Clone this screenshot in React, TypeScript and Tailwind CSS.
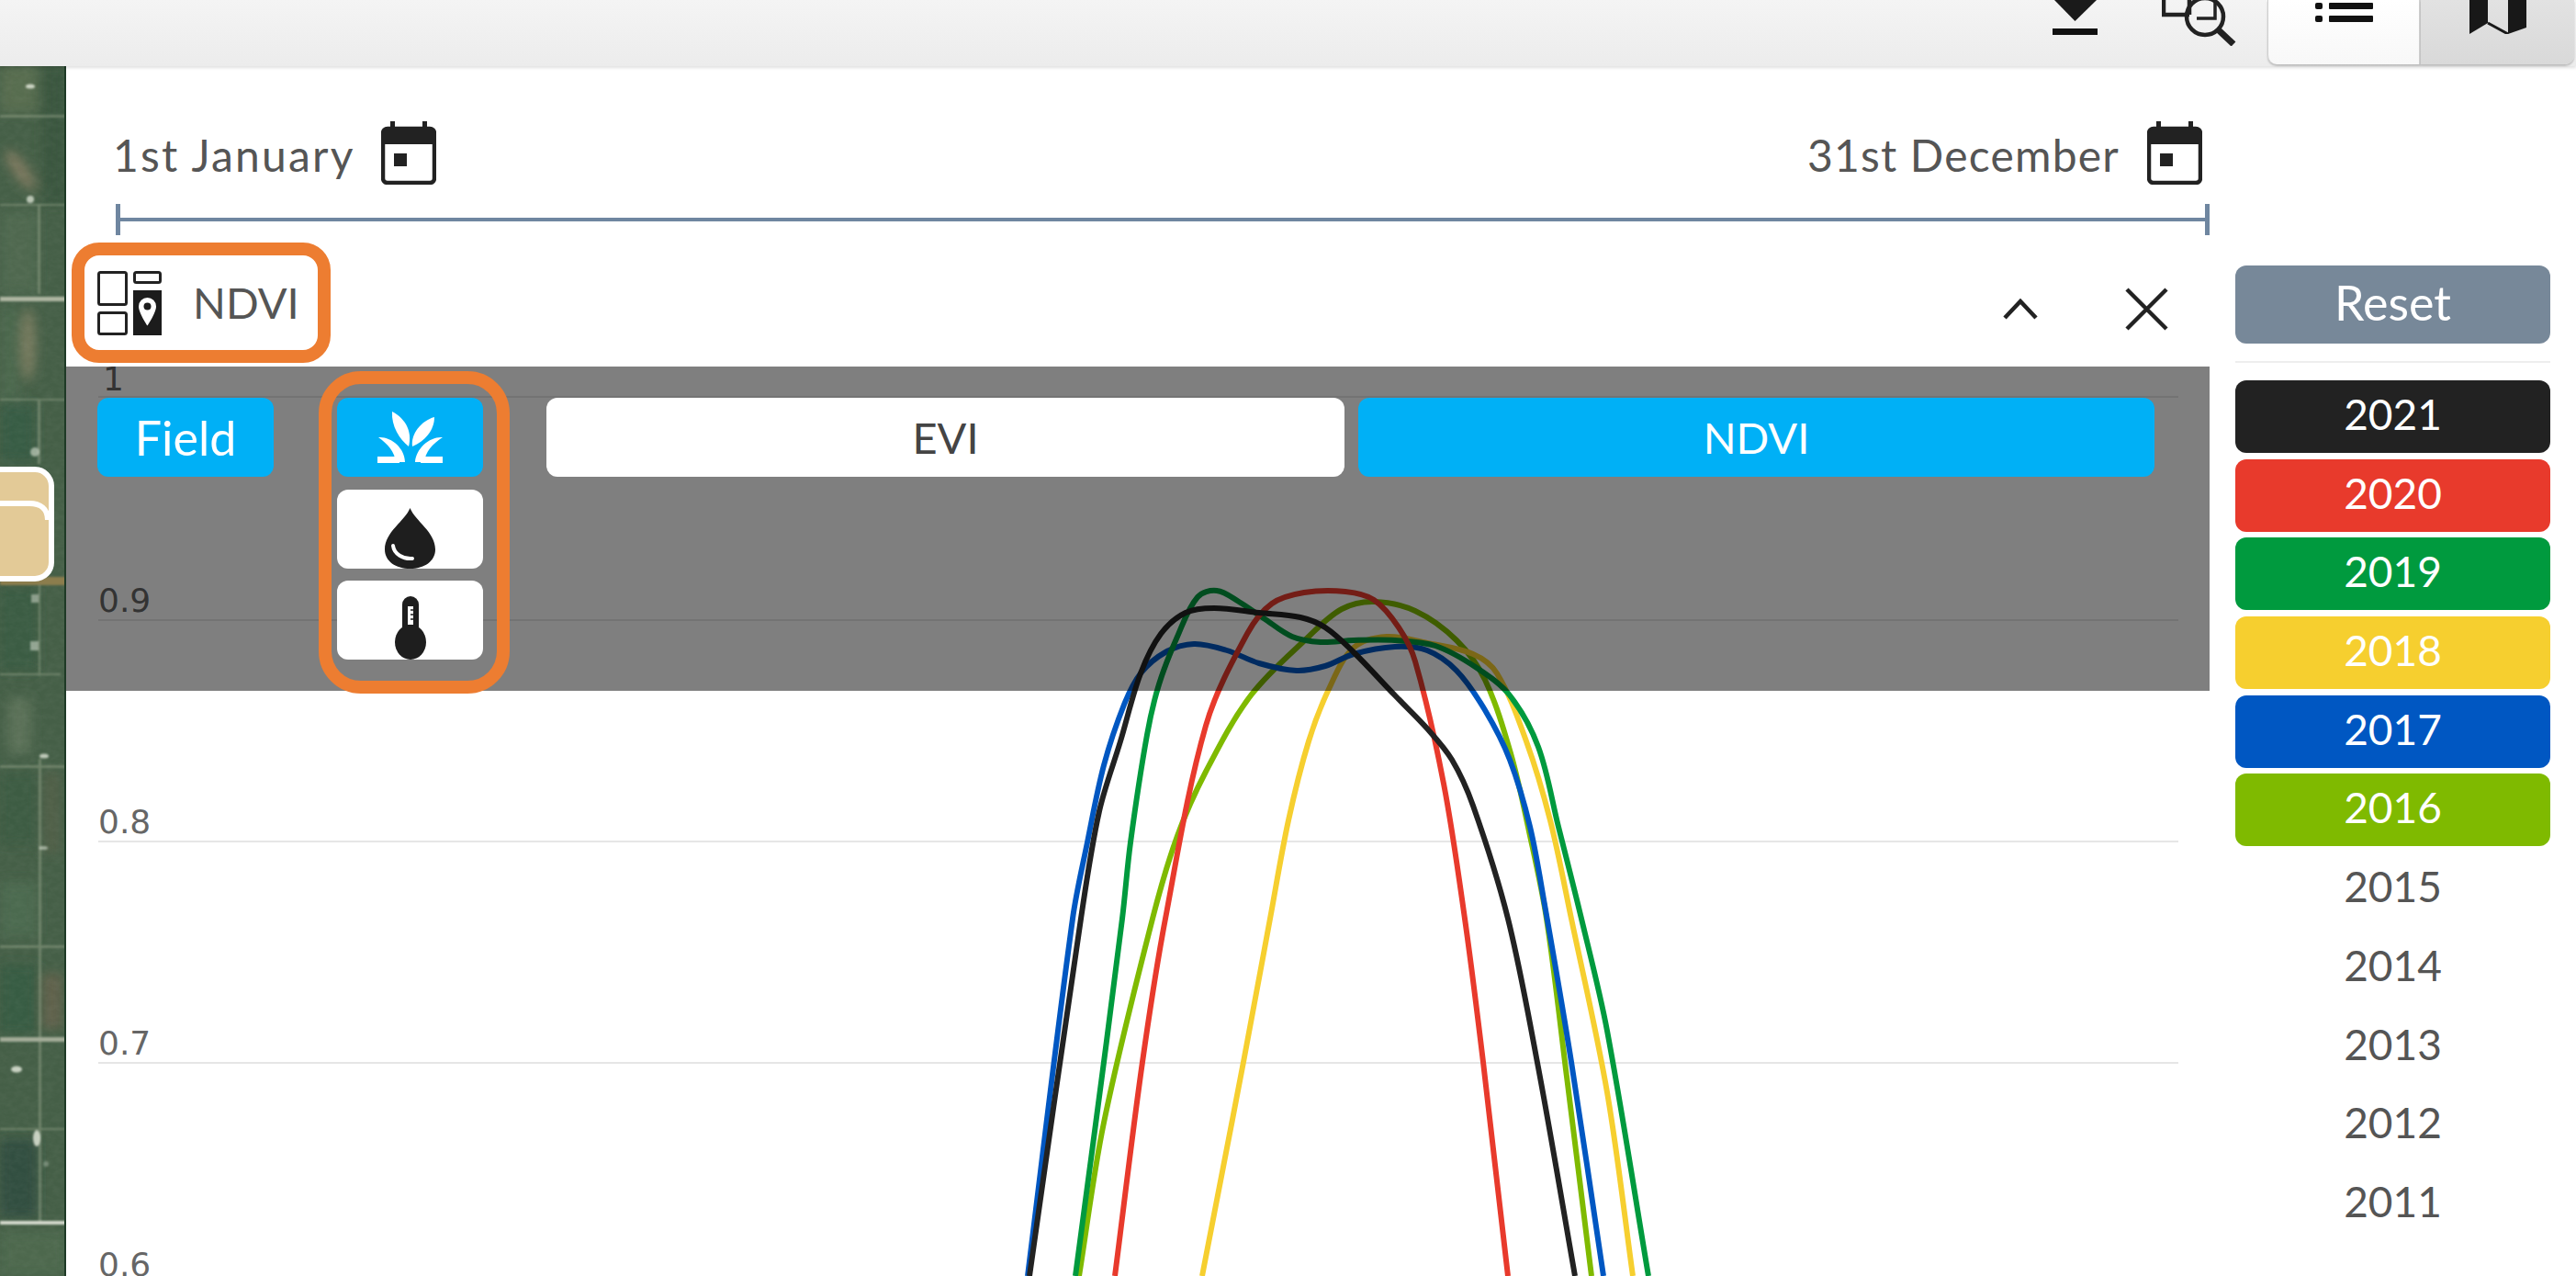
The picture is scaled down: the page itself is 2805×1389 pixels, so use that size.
import React from 'react';

type Point = [number, number];

interface Curve {
  color: string;
  points: Point[];
}

// smooth line through the read-off points, handle length follows the chord so uneven spacing doesn't kink
const smooth = (pts: Point[]): string => {
  const tangent = (i: number): Point => {
    const a = pts[i - 1] || pts[i];
    const b = pts[i + 1] || pts[i];
    const len = Math.hypot(b[0] - a[0], b[1] - a[1]) || 1;
    return [(b[0] - a[0]) / len, (b[1] - a[1]) / len];
  };
  let d = `M${pts[0][0]} ${pts[0][1]}`;
  for (let i = 0; i < pts.length - 1; i++) {
    const p1 = pts[i];
    const p2 = pts[i + 1];
    const chord = Math.hypot(p2[0] - p1[0], p2[1] - p1[1]) / 3;
    const t1 = tangent(i);
    const t2 = tangent(i + 1);
    d += ` C${(p1[0] + t1[0] * chord).toFixed(1)} ${(p1[1] + t1[1] * chord).toFixed(1)} ${(p2[0] - t2[0] * chord).toFixed(1)} ${(p2[1] - t2[1] * chord).toFixed(1)} ${p2[0]} ${p2[1]}`;
  }
  return d;
};

const curves: Curve[] = [
  {
    color: '#7fba00',
    points: [[1175, 1389], [1202, 1222], [1255, 1000], [1282, 910], [1313, 840], [1362, 757], [1425, 693], [1461, 663], [1496, 655], [1541, 665], [1586, 697], [1617, 740], [1645, 820], [1665, 905], [1684, 1000], [1706, 1172], [1733, 1389]],
  },
  {
    color: '#f6cf2f',
    points: [[1309, 1389], [1354, 1156], [1383, 1000], [1403, 893], [1425, 807], [1447, 750], [1474, 705], [1510, 693], [1554, 700], [1604, 712], [1630, 733], [1662, 807], [1688, 893], [1711, 1000], [1750, 1189], [1778, 1389]],
  },
  {
    color: '#0057c2',
    points: [[1119, 1389], [1168, 1000], [1184, 917], [1202, 833], [1224, 767], [1242, 733], [1269, 710], [1300, 701], [1336, 708], [1371, 722], [1412, 730], [1443, 725], [1474, 712], [1519, 704], [1554, 708], [1586, 730], [1617, 773], [1644, 827], [1666, 900], [1682, 985], [1711, 1156], [1746, 1389]],
  },
  {
    color: '#009a3e',
    points: [[1171, 1389], [1202, 1156], [1222, 1000], [1231, 917], [1249, 800], [1262, 745], [1282, 693], [1304, 650], [1325, 643], [1349, 655], [1376, 673], [1407, 693], [1438, 699], [1474, 697], [1519, 697], [1563, 703], [1608, 727], [1644, 757], [1675, 813], [1697, 900], [1722, 1000], [1750, 1122], [1795, 1389]],
  },
  {
    color: '#e83a2c',
    points: [[1214, 1389], [1244, 1156], [1269, 1000], [1313, 790], [1358, 690], [1385, 657], [1420, 645], [1465, 644], [1496, 653], [1523, 683], [1541, 720], [1572, 853], [1595, 1000], [1615, 1156], [1642, 1389]],
  },
  {
    color: '#222222',
    points: [[1121, 1389], [1177, 1000], [1197, 883], [1220, 807], [1242, 733], [1264, 690], [1291, 667], [1322, 662], [1371, 667], [1416, 672], [1443, 683], [1474, 710], [1519, 757], [1554, 793], [1581, 827], [1604, 877], [1642, 1000], [1675, 1162], [1715, 1389]],
  },
];

const gridLines = [
  { label: '1', y: 432, x: 112, base: 425 },
  { label: '0.9', y: 675, x: 107, base: 666 },
  { label: '0.8', y: 916, x: 107, base: 907 },
  { label: '0.7', y: 1157, x: 107, base: 1148 },
  { label: '0.6', y: 1398, x: 107, base: 1389 },
];

const years = [
  { year: '2021', bg: 'bg-[#222222] text-white' },
  { year: '2020', bg: 'bg-[#e83a2c] text-white' },
  { year: '2019', bg: 'bg-[#009a3e] text-white' },
  { year: '2018', bg: 'bg-[#f6cf2f] text-white' },
  { year: '2017', bg: 'bg-[#0057c2] text-white' },
  { year: '2016', bg: 'bg-[#7fba00] text-white' },
  { year: '2015', bg: 'text-[#555555]' },
  { year: '2014', bg: 'text-[#555555]' },
  { year: '2013', bg: 'text-[#555555]' },
  { year: '2012', bg: 'text-[#555555]' },
  { year: '2011', bg: 'text-[#555555]' },
];

const CalendarIcon = () => (
  <svg width="60" height="69" viewBox="0 0 60 69" className="shrink-0">
    <rect x="10" y="0" width="5" height="10" fill="#222" />
    <rect x="45" y="0" width="5" height="10" fill="#222" />
    <rect x="2" y="8" width="56" height="59" rx="5" fill="none" stroke="#222" strokeWidth="4.5" />
    <path d="M2 13a5 5 0 0 1 5-5h46a5 5 0 0 1 5 5v12H2z" fill="#222" />
    <rect x="14" y="35" width="14" height="14" fill="#222" />
  </svg>
);

const LayersIcon = () => (
  <svg width="70" height="70" viewBox="0 0 70 70" className="shrink-0">
    <g fill="none" stroke="#222" strokeWidth="3">
      <rect x="1.5" y="1.5" width="30" height="35" rx="2" />
      <rect x="1.5" y="45.5" width="30" height="23" rx="2" />
      <rect x="40.5" y="1.5" width="28" height="11" rx="2" />
    </g>
    <rect x="39" y="21" width="31" height="49" fill="#1c1c1c" />
    <path d="M54.5 29a9.5 9.5 0 0 1 9.5 9.5c0 7-9.5 21-9.5 21s-9.5-14-9.5-21a9.5 9.5 0 0 1 9.5-9.5z" fill="#fff" />
    <circle cx="54.5" cy="38.5" r="4" fill="#1c1c1c" />
  </svg>
);

const LeafIcon = () => (
  <svg width="71" height="56" viewBox="0 0 71 56" fill="#fff">
    <path d="M16 0C31 8 38 22 34 38C24 30 15 16 16 0Z" />
    <path d="M62 6C48 10 36 24 38 38C52 32 62 20 62 6Z" />
    <path d="M1 28C15 27 30 40 30 55H20C19 44 11 35 1 28Z" />
    <path d="M71 28C57 27 42 40 41 55H51C52 44 60 35 71 28Z" />
    <path d="M0 49H24V56H0Z" />
    <path d="M47 49H71V56H47Z" />
  </svg>
);

const DropIcon = () => (
  <svg width="55" height="66" viewBox="0 0 55 66">
    <path d="M27.5 0C33 14 55 26 55 45C55 58 43 66 27.5 66C12 66 0 58 0 45C0 26 22 14 27.5 0Z" fill="#1e1e1e" />
    <path d="M9 41C10 50 20 56 30 55" fill="none" stroke="#fff" strokeWidth="4" strokeLinecap="round" />
  </svg>
);

const ThermometerIcon = () => (
  <svg width="34" height="69" viewBox="0 0 34 69">
    <rect x="8" y="0" width="18" height="44" rx="9" fill="#1e1e1e" />
    <ellipse cx="17" cy="50" rx="17" ry="19" fill="#1e1e1e" />
    <rect x="14" y="11" width="6" height="20" fill="#fff" />
    <path d="M17 15h3M17 20h3M17 25h3" stroke="#1e1e1e" strokeWidth="1.5" />
  </svg>
);

const TopBarIcons = () => (
  <>
    <svg width="49" height="38" viewBox="0 0 49 38" className="shrink-0">
      <path d="M2 0H48L24.5 23Z" fill="#1a1a1a" />
      <rect x="0" y="31" width="49" height="7" fill="#111" />
    </svg>
    <svg width="82" height="50" viewBox="0 0 82 50" className="ml-[70px] shrink-0" fill="none" stroke="#222" strokeWidth="4.5">
      <path d="M2 0V16H30" />
      <path d="M30 0V16" />
      <circle cx="47" cy="18" r="20" />
      <path d="M62 33L78 48" strokeWidth="7" />
      <path d="M50 -2H58V20H38" strokeWidth="3.5" />
    </svg>
  </>
);

// satellite strip on the left, just blurred patches and field tracks
const MapStrip = () => (
  <svg width="72" height="1317" viewBox="0 72 72 1317" className="shrink-0">
    <defs>
      <filter id="soft" x="-30%" y="-30%" width="160%" height="160%">
        <feGaussianBlur stdDeviation="6" />
      </filter>
      <filter id="softer" x="-20%" y="-20%" width="140%" height="140%">
        <feGaussianBlur stdDeviation="1.1" />
      </filter>
      <filter id="grain">
        <feTurbulence type="fractalNoise" baseFrequency="0.12 0.18" numOctaves="3" seed="7" />
        <feColorMatrix values="0 0 0 0 0.75  0 0 0 0 0.8  0 0 0 0 0.7  0.8 0 0 0 -0.25" />
      </filter>
    </defs>
    <rect x="0" y="72" width="72" height="1317" fill="#3f5e45" />
    <g filter="url(#soft)">
      <rect x="0" y="72" width="40" height="50" fill="#566f50" />
      <rect x="46" y="72" width="26" height="150" fill="#31523a" />
      <ellipse cx="22" cy="185" rx="8" ry="26" transform="rotate(-35 22 185)" fill="#857f63" />
      <rect x="0" y="230" width="40" height="90" fill="#4b6b4f" />
      <ellipse cx="31" cy="375" rx="8" ry="40" fill="#7f8264" />
      <rect x="0" y="335" width="22" height="100" fill="#47694e" />
      <rect x="0" y="440" width="38" height="62" fill="#2f5a42" />
      <rect x="0" y="640" width="40" height="90" fill="#335a41" />
      <rect x="8" y="760" width="26" height="60" fill="#5a745a" />
      <rect x="0" y="840" width="40" height="80" fill="#345a40" />
      <rect x="46" y="840" width="20" height="90" fill="#4d5f47" />
      <rect x="46" y="1060" width="22" height="60" fill="#62624c" />
      <rect x="0" y="960" width="40" height="60" fill="#466c50" />
      <rect x="0" y="1050" width="40" height="75" fill="#2f5a40" />
      <rect x="0" y="1240" width="40" height="85" fill="#274a3c" />
      <rect x="0" y="1340" width="72" height="49" fill="#4a6b4d" />
    </g>
    <rect x="0" y="72" width="72" height="1317" fill="#5f6352" opacity="0.2" />
    <rect x="0" y="72" width="72" height="1317" filter="url(#grain)" opacity="0.1" />
    <g filter="url(#softer)">
      <g fill="#a9b49c" opacity="0.4">
        <rect x="0" y="125" width="72" height="3" />
        <rect x="0" y="222" width="72" height="2" />
        <rect x="0" y="434" width="72" height="2" />
        <rect x="0" y="733" width="66" height="2" />
        <rect x="0" y="833" width="72" height="3" />
        <rect x="0" y="1029" width="72" height="3" />
        <rect x="0" y="1228" width="72" height="2" />
        <rect x="41" y="222" width="3" height="98" />
        <rect x="41" y="435" width="3" height="70" />
        <rect x="42" y="636" width="2" height="100" />
        <rect x="42" y="826" width="3" height="505" />
      </g>
      <rect x="0" y="323" width="72" height="5" fill="#aeb6a2" />
      <rect x="0" y="1129" width="72" height="5" fill="#a3ac98" />
      <rect x="0" y="1329" width="72" height="4" fill="#d5dace" />
      <rect x="0" y="628" width="72" height="9" fill="#8c7d4e" />
      <g fill="#e8eee0">
        <ellipse cx="33" cy="94" rx="5" ry="2.5" opacity="0.8" />
        <ellipse cx="33" cy="217" rx="4" ry="4" opacity="0.7" />
        <ellipse cx="38" cy="492" rx="5" ry="5" opacity="0.55" />
        <rect x="34" y="647" width="8" height="9" opacity="0.45" />
        <rect x="33" y="698" width="9" height="10" opacity="0.5" />
        <ellipse cx="48" cy="823" rx="5" ry="2.5" opacity="0.75" />
        <ellipse cx="47" cy="923" rx="5" ry="2" opacity="0.55" />
        <ellipse cx="18" cy="1164" rx="6" ry="3.5" opacity="0.8" />
        <ellipse cx="40" cy="1239" rx="4" ry="9" opacity="0.8" />
        <ellipse cx="50" cy="1267" rx="3" ry="3" opacity="0.3" />
      </g>
    </g>
    <rect x="70" y="72" width="2" height="1317" fill="#1e3a26" />
    <rect x="-20" y="511" width="76" height="119" rx="18" fill="#e3ca97" stroke="#fff" strokeWidth="6" />
    <path d="M-20 548H32C44 548 52 554 52 566" fill="none" stroke="#fff" strokeWidth="6" />
  </svg>
);

const Chart = () => (
  <svg viewBox="72 399 2334 990" width="2334" height="990" className="absolute left-0 top-0 overflow-visible">
    {gridLines.map((g) => (
      <g key={g.label}>
        <rect x="107" y={g.y - 1} width="2265" height="2" fill="#e6e6e6" />
        <text x={g.x} y={g.base} fontSize="36" fill="#666666" fontFamily="'DejaVu Sans', sans-serif">
          {g.label}
        </text>
      </g>
    ))}
    {curves.map((c) => (
      <path key={c.color} d={smooth(c.points)} fill="none" stroke={c.color} strokeWidth="6" strokeLinejoin="round" />
    ))}
  </svg>
);

export default function App() {
  return (
    <div className="flex h-[1389px] w-[2805px] flex-col overflow-hidden bg-white text-[#555555] [font-family:Lato,sans-serif]">
      {/* top bar, cut off by the screenshot */}
      <div className="relative z-10 flex h-[72px] shrink-0 items-start justify-end bg-gradient-to-b from-[#f4f4f4] to-[#ececec] pr-[2px] shadow-[0_2px_3px_rgba(0,0,0,0.12)]">
        <div className="mr-[33px] flex items-start">
          <TopBarIcons />
        </div>
        <div className="flex h-[70px] w-[167px] items-start justify-center rounded-bl-[10px] border-l border-r-2 border-[#cfcfcf] bg-gradient-to-b from-white to-[#f8f8f8] pt-[3px] shadow-[0_2px_2px_rgba(0,0,0,0.2)]">
          <svg width="63" height="21" viewBox="0 0 63 21">
            <rect x="0" y="0" width="8" height="7" rx="2" fill="#111" />
            <rect x="15" y="0" width="48" height="7" rx="1" fill="#111" />
            <rect x="0" y="14" width="8" height="7" rx="2" fill="#111" />
            <rect x="15" y="14" width="48" height="7" rx="1" fill="#111" />
          </svg>
        </div>
        <div className="flex h-[70px] w-[167px] items-start justify-center rounded-br-[10px] bg-gradient-to-b from-[#e2e2e2] to-[#d9d9d9] shadow-[0_2px_2px_rgba(0,0,0,0.2)]">
          <svg width="62" height="37" viewBox="0 0 62 37">
            <path d="M0 0H20V25L0 37Z" fill="#181818" />
            <path d="M42 0H62V30L42 37Z" fill="#181818" />
            <path d="M20 25L42 37" fill="none" stroke="#181818" strokeWidth="3" />
          </svg>
        </div>
      </div>

      <div className="flex min-h-0 flex-1">
        <MapStrip />

        {/* chart panel */}
        <div className="flex w-[2334px] shrink-0 flex-col">
          <div className="flex h-[127px] shrink-0 items-start justify-between pl-[51px] pr-[8px] pt-[58px]">
            <div className="flex items-center gap-[28px]">
              <span className="pt-[4px] text-[48px] leading-[69px] tracking-[2.2px]">1st January</span>
              <CalendarIcon />
            </div>
            <div className="flex items-center gap-[30px]">
              <span className="pt-[4px] text-[48px] leading-[69px] tracking-[1.2px]">31st December</span>
              <CalendarIcon />
            </div>
          </div>
          <div className="ml-[54px] mt-[23px] flex h-[34px] shrink-0 items-center border-x-[5px] border-[#6f86a0]">
            <div className="h-[4px] flex-1 bg-[#6f86a0]" />
          </div>
          <div className="mt-[8px] flex h-[135px] shrink-0 items-start justify-between">
            <div className="ml-[6px] flex h-[131px] w-[282px] items-center gap-[34px] rounded-[30px] border-[14px] border-[#ed7d31] pl-[14px]">
              <LayersIcon />
              <span className="text-[47px] leading-none">NDVI</span>
            </div>
            <div className="flex items-center gap-[95px] pr-[45px] pt-[49px]">
              <svg width="38" height="23" viewBox="0 0 38 23" fill="none" stroke="#222" strokeWidth="4.5">
                <path d="M2 21L19 3L36 21" />
              </svg>
              <svg width="47" height="47" viewBox="0 0 47 47" fill="none" stroke="#222" strokeWidth="4.5">
                <path d="M2 2L45 45M45 2L2 45" />
              </svg>
            </div>
          </div>

          <div className="relative flex-1">
            <Chart />
            {/* grey mask over the top of the chart, with the selectors on it */}
            <div className="absolute inset-x-0 top-0 flex h-[353px] items-start bg-black/50 pl-[34px] pt-[34px]">
              <button className="h-[86px] w-[192px] rounded-[12px] bg-[#00b0f6] text-[52px] leading-none text-white">Field</button>
              <div className="relative ml-[69px] flex w-[159px] flex-col gap-[13.5px]">
                <div className="flex h-[86px] items-center justify-center rounded-[12px] bg-[#00b0f6]">
                  <LeafIcon />
                </div>
                <div className="flex h-[86px] items-end justify-center rounded-[12px] bg-white">
                  <DropIcon />
                </div>
                <div className="flex h-[86px] items-end justify-center rounded-[12px] bg-white">
                  <ThermometerIcon />
                </div>
                <div className="absolute -bottom-[37px] -left-[20px] -right-[29px] -top-[29px] rounded-[46px] border-[14px] border-[#ed7d31]" />
              </div>
              <button className="ml-[69px] h-[86px] w-[869px] rounded-[12px] bg-white text-[47px] leading-none text-[#444444]">EVI</button>
              <button className="ml-[15px] h-[86px] w-[867px] rounded-[12px] bg-[#00b0f6] text-[47px] leading-none text-white">NDVI</button>
            </div>
          </div>
        </div>

        {/* year selector */}
        <div className="flex flex-1 flex-col px-[28px] pt-[217px]">
          <button className="h-[85px] shrink-0 rounded-[12px] bg-[#778899] pb-[5px] text-[52px] leading-none text-white">Reset</button>
          <div className="mt-[19px] h-[2px] shrink-0 bg-[#eeeeee]" />
          <div className="mt-[19px] flex flex-col gap-[6.7px]">
            {years.map((y) => (
              <div key={y.year} className={`flex h-[79px] items-center justify-center rounded-[12px] pb-[5px] text-[46px] leading-none ${y.bg}`}>
                {y.year}
              </div>
            ))}
          </div>
        </div>
      </div>
    </div>
  );
}
